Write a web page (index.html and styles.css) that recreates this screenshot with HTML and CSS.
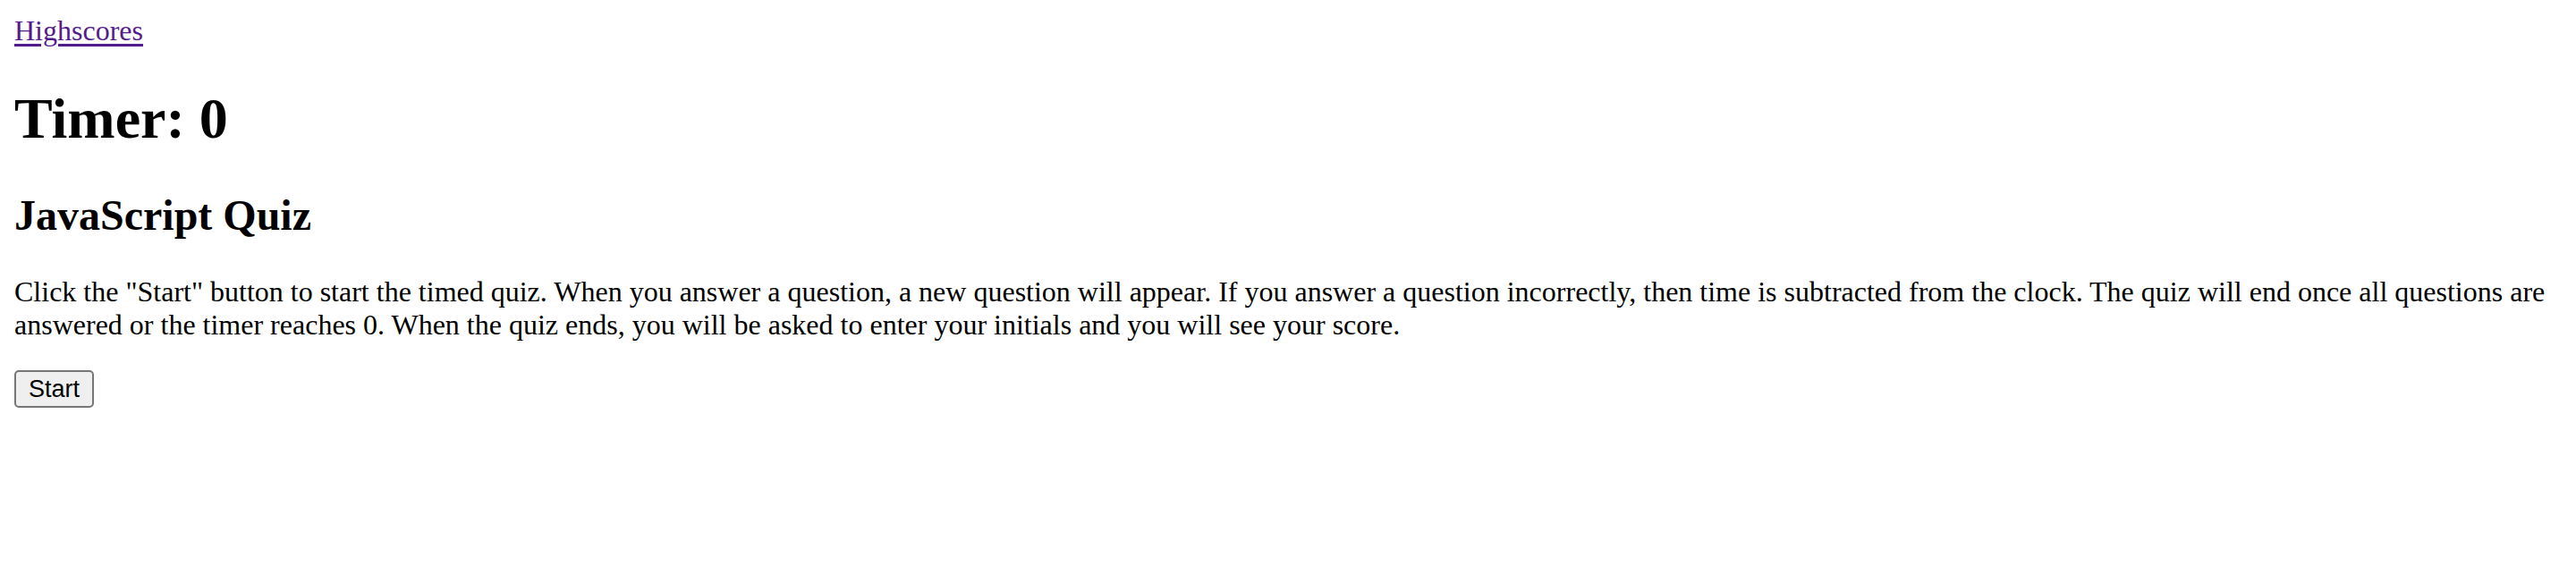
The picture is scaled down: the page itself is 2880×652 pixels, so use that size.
FILE: index.html
```html
<!DOCTYPE html>
<html lang="en">
<head>
<meta charset="utf-8">
<title>JavaScript Quiz</title>
<link rel="stylesheet" href="styles.css">
</head>
<body class="page">
  <a class="highscores" href="#">Highscores</a>
  <h1 class="timer">Timer: 0</h1>
  <h2 class="title">JavaScript Quiz</h2>
  <p class="intro">Click the "Start" button to start the timed quiz. When you answer a question, a new question will appear. If you answer a question incorrectly, then time is subtracted from the clock. The quiz will end once all questions are answered or the timer reaches 0. When the quiz ends, you will be asked to enter your initials and you will see your score.</p>
  <button class="start-btn" type="button">Start</button>
</body>
</html>
```

FILE: styles.css
```css
html, body {
  background: #ffffff;
}
.page {
  margin: 16px;
  font-family: "Liberation Serif", "Times New Roman", serif;
  font-size: 32px;
  color: #000000;
}
.highscores {
  color: #551a8b;
  text-decoration: underline;
  text-decoration-thickness: 3px;
  text-underline-offset: 4px;
}
.timer {
  font-size: 64px;
  font-weight: bold;
  margin: 42.88px 0;
}
.title {
  font-size: 48px;
  font-weight: bold;
  margin: 39.84px 0;
}
.intro {
  margin: 32px 0;
}
.start-btn {
  font-family: "Liberation Sans", Arial, sans-serif;
  font-size: 27px;
  line-height: 32px;
  color: #000000;
  background: #efefef;
  border: 2px solid #767676;
  border-radius: 5px;
  padding: 3px 14px;
  margin: 0;
}
```
